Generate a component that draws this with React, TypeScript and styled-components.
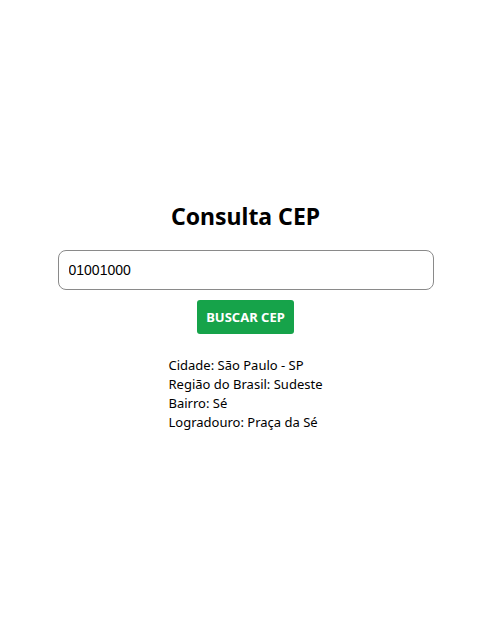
import React, { useState } from "react";
import styled, { createGlobalStyle } from "styled-components";

const Global = createGlobalStyle`
  html, body { margin: 0; padding: 0; background: #ffffff; }
  body { font-family: "Noto Sans", "Open Sans", sans-serif; color: #000; }
  * { box-sizing: border-box; }
`;

const Page = styled.main`
  min-height: 617px;
  display: flex;
  flex-direction: column;
  align-items: center;
  justify-content: center;
  padding: 14px 8px 0 0;
`;

const Title = styled.h1`
  margin: 0 0 18px;
  font-size: 23px;
  font-weight: 700;
  line-height: 32px;
`;

const Input = styled.input`
  width: 376px;
  height: 40px;
  padding: 0 10px;
  border: 1px solid #8a8a8a;
  border-radius: 8px;
  font-family: "Liberation Sans", Arial, sans-serif;
  font-size: 14px;
  color: #000;
  outline: none;
`;

const Button = styled.button`
  margin-top: 10px;
  height: 34px;
  padding: 0 9px;
  border: none;
  border-radius: 3px;
  background: #16a34a;
  color: #fff;
  font-family: "Noto Sans", sans-serif;
  font-size: 13px;
  font-weight: 700;
  cursor: pointer;
`;

const Result = styled.div`
  margin-top: 22px;
  display: flex;
  flex-direction: column;
  align-items: flex-start;
  font-size: 13px;
  line-height: 19px;
`;

const Line = styled.span``;

export default function App() {
  const [cep, setCep] = useState("01001000");
  return (
    <>
      <Global />
      <Page>
        <Title>Consulta CEP</Title>
        <Input value={cep} onChange={(e) => setCep(e.target.value)} />
        <Button>BUSCAR CEP</Button>
        <Result>
          <Line>Cidade: São Paulo - SP</Line>
          <Line>Região do Brasil: Sudeste</Line>
          <Line>Bairro: Sé</Line>
          <Line>Logradouro: Praça da Sé</Line>
        </Result>
      </Page>
    </>
  );
}
